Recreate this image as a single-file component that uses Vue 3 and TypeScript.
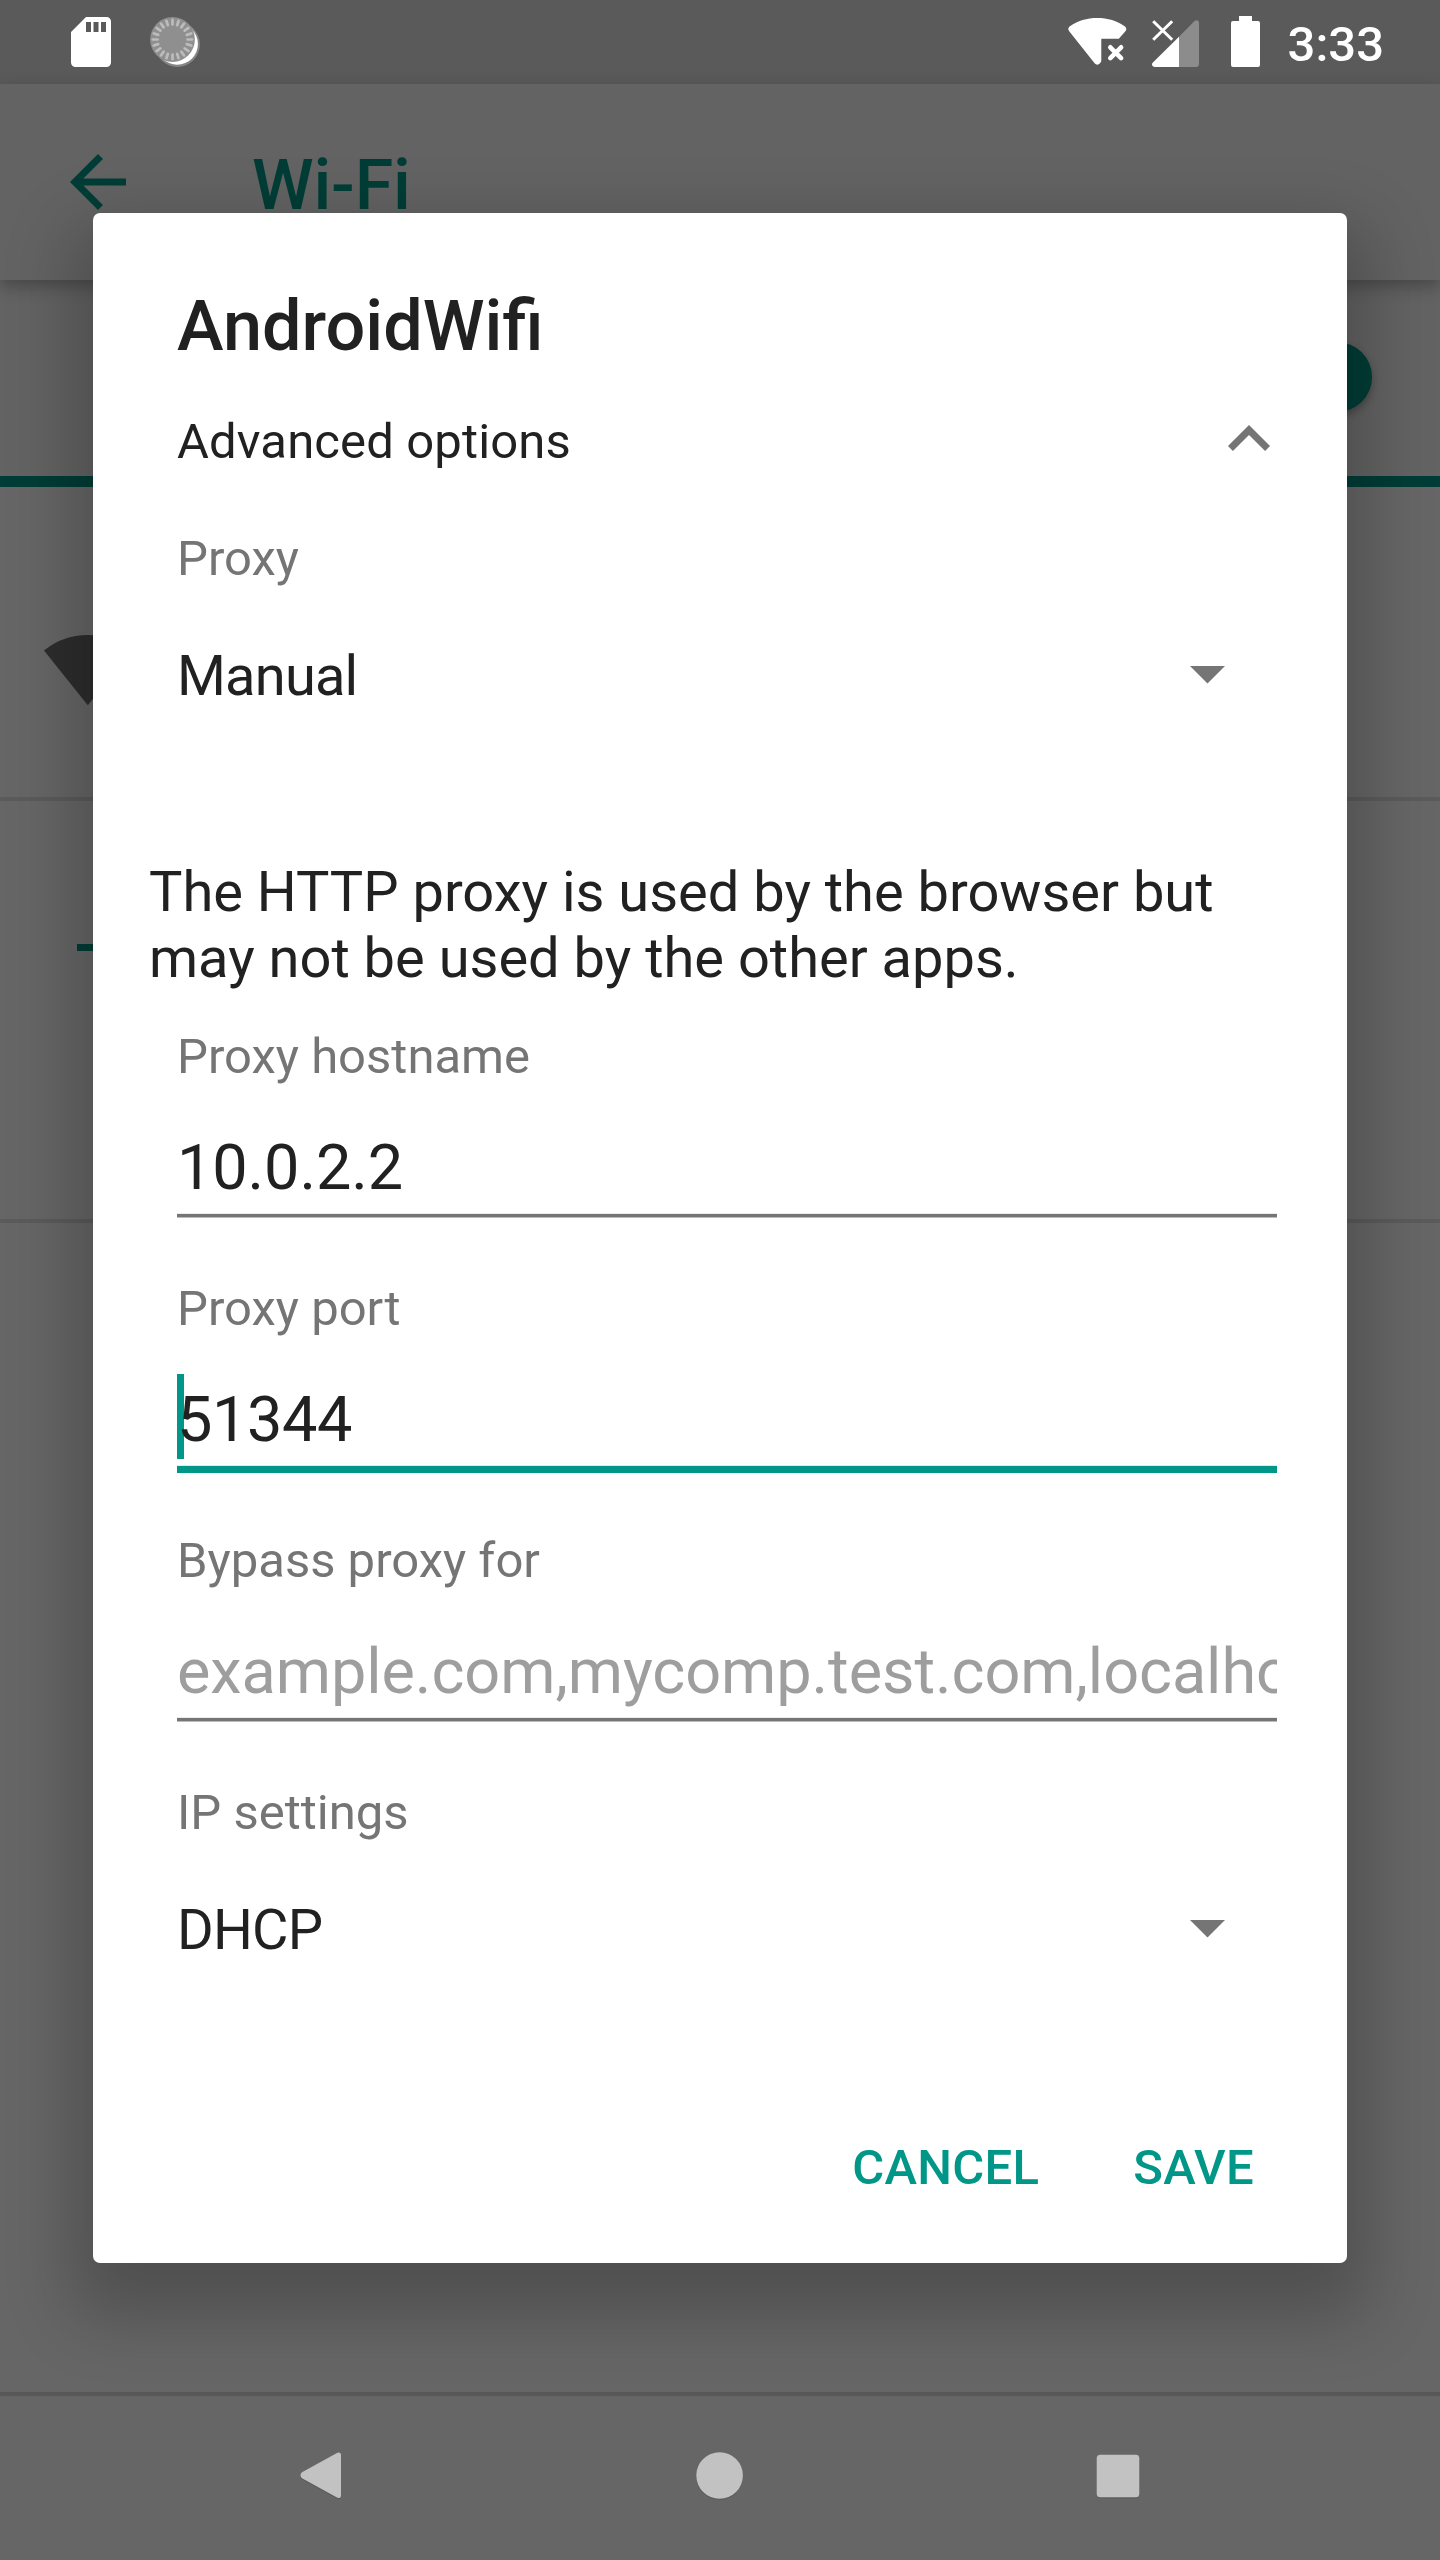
<script setup lang="ts">
interface ProxyField {
  label: string
  value: string
  hint?: boolean
  focused?: boolean
}

const fields: ProxyField[] = [
  { label: 'Proxy hostname', value: '10.0.2.2' },
  { label: 'Proxy port', value: '51344', focused: true },
  { label: 'Bypass proxy for', value: 'example.com,mycomp.test.com,localhost', hint: true },
]

const ticks: number[] = Array.from({ length: 20 }, (_, i) => i * 18)
</script>

<template>
  <div class="device">
    <header class="status-bar">
      <svg class="sd" width="40" height="50" viewBox="0 0 40 50">
        <path fill="#fff" fill-rule="evenodd" d="M15 0H35.500a4.500 4.500 0 0 1 4.500 4.500V45.500a4.500 4.500 0 0 1-4.500 4.500H4.500A4.500 4.500 0 0 1 0 45.500V15zM15 5v10h5V5zM22.500 5v10h5V5zM30 5v10h5V5z" />
      </svg>
      <svg class="sync" width="50" height="50" viewBox="0 0 50 50">
        <circle cx="27.400" cy="27.400" r="22.500" fill="#858585" />
        <circle cx="27.200" cy="27" r="20.700" fill="#fff" />
        <circle cx="22.500" cy="22.500" r="22.400" fill="#8f8f8f" />
        <g stroke="#bcbcbc" stroke-width="2.700" stroke-linecap="round">
          <line v-for="angle in ticks" :key="angle" x1="22.500" y1="2.800" x2="22.500" y2="7.500" :transform="`rotate(${angle} 22.500 22.500)`" />
        </g>
      </svg>
      <span class="grow"></span>
      <svg class="wifi-status" width="60" height="50" viewBox="0 0 60 50">
        <path fill="#fff" d="M1.200 14.200C-.2 12.600 0 10.900 1.600 9.600 9.500 3.600 19 1 29.300 1s19.800 2.600 27.700 8.600c1.600 1.300 1.800 3 .4 4.600l-6.600 7.500H33.300v22.500L32 46.200c-1.600 1.900-3.800 1.900-5.400 0z" />
        <path d="M42.300 30.300l10.800 10.800M53.100 30.300L42.300 41.100" stroke="#fff" stroke-width="4.600" stroke-linecap="round" />
      </svg>
      <svg class="signal" width="47" height="50" viewBox="0 0 47 50">
        <path fill="#8c8c8c" d="M27 19.700L42.300 4.200C44.200 2.300 47 3.300 47 6v41a3 3 0 0 1-3 3H27z" />
        <path fill="#fff" d="M27 19.700V50H3C.2 50-1 47.200.9 45.600z" />
        <path d="M1.200 4.200L20.200 22.800M20.200 4.200L1.200 22.800" stroke="#fff" stroke-width="3" />
      </svg>
      <svg class="battery" width="29" height="51" viewBox="0 0 29 51">
        <path fill="#fff" d="M8 0h13v5h6a2 2 0 0 1 2 2v42a2 2 0 0 1-2 2H2a2 2 0 0 1-2-2V7a2 2 0 0 1 2-2h6z" />
      </svg>
      <span class="clock">3:33</span>
    </header>

    <div class="app-bar">
      <svg width="84" height="84" viewBox="0 0 24 24">
        <path fill="#003d36" d="M20 11H7.830l5.590-5.590L12 4l-8 8 8 8 1.410-1.410L7.830 13H20z" />
      </svg>
      <h1>Wi-Fi</h1>
    </div>

    <div class="switch-bar"><span class="thumb"></span></div>

    <main class="networks">
      <div class="network">
        <svg width="88" height="71" viewBox="0 0 88 71">
          <path fill="#2d2d2d" d="M43.800 70.300L0 15.500C12.500 5.300 27.500 0 43.800 0s31.300 5.300 43.800 15.500z" />
        </svg>
      </div>
      <div class="add">
        <svg width="49" height="49" viewBox="0 0 49 49">
          <path fill="#003d36" d="M21 0h7v21h21v7H28v21h-7V28H0v-7h21z" />
        </svg>
      </div>
    </main>

    <nav class="nav-bar">
      <svg width="42" height="48" viewBox="0 0 42 48">
        <path fill="#5c5c5c" d="M36.400 2.600C38.500 1 41 1.800 41 4.500v40c0 2.700-2.500 3.500-4.600 1.900L2 27.500c-2-1.700-2-4.300 0-6z" />
        <path fill="#c2c2c2" d="M36.500 1.200C38.600-.4 41 .4 41 3v40.500c0 2.600-2.400 3.400-4.500 1.800L2 26.300c-2-1.700-2-4.300 0-6z" />
      </svg>
      <svg width="48" height="49" viewBox="0 0 48 49">
        <circle cx="24.600" cy="24.800" r="23.300" fill="#5c5c5c" />
        <circle cx="24.600" cy="23.500" r="23.300" fill="#c2c2c2" />
      </svg>
      <svg width="44" height="45" viewBox="0 0 44 45">
        <rect x=".7" y="1.800" width="42.600" height="42.600" rx="3.500" fill="#5c5c5c" />
        <rect x=".7" y=".7" width="42.600" height="42.600" rx="3.500" fill="#c2c2c2" />
      </svg>
    </nav>

    <div class="scrim">
      <section class="dialog">
        <h2>AndroidWifi</h2>
        <div class="advanced">
          <span>Advanced options</span>
          <svg width="84" height="84" viewBox="0 0 24 24">
            <path fill="#757575" d="M12 8l-6 6 1.410 1.410L12 10.830l4.590 4.580L18 14z" />
          </svg>
        </div>
        <div class="choice">
          <label>Proxy</label>
          <div class="select">
            <span>Manual</span>
            <svg width="35" height="18" viewBox="0 0 35 18"><path fill="#757575" d="M0 0h35L17.500 17.500z" /></svg>
          </div>
        </div>
        <p>The HTTP proxy is used by the browser but may not be used by the other apps.</p>
        <div v-for="field in fields" :key="field.label" class="field">
          <label>{{ field.label }}</label>
          <div class="input" :class="{ focused: field.focused, hint: field.hint }">
            <span v-if="field.focused" class="cursor"></span>
            <span class="value">{{ field.value }}</span>
          </div>
        </div>
        <div class="choice">
          <label>IP settings</label>
          <div class="select">
            <span>DHCP</span>
            <svg width="35" height="18" viewBox="0 0 35 18"><path fill="#757575" d="M0 0h35L17.500 17.500z" /></svg>
          </div>
        </div>
        <footer>
          <button type="button">CANCEL</button>
          <button type="button">SAVE</button>
        </footer>
      </section>
    </div>
  </div>
</template>

<style>
body {
  margin: 0;
  background: #666;
}
</style>

<style scoped>
.device {
  position: relative;
  display: flex;
  flex-direction: column;
  width: 1440px;
  height: 2560px;
  overflow: hidden;
  background: #666;
  font-family: Roboto, "Noto Sans", sans-serif;
  box-sizing: border-box;
}

.device svg {
  display: block;
  flex: none;
}

h1, h2, p {
  margin: 0;
  font-weight: 500;
}

.status-bar {
  display: flex;
  align-items: flex-start;
  height: 84px;
  box-sizing: border-box;
  padding: 16px 56px 0 71px;
  background: #5a5a5a;
}

.status-bar .sd { margin: 1px 39px 0 0; }
.status-bar .sync { margin-top: 1px; }
.grow { flex: 1; }
.status-bar .wifi-status { margin: 1px 24px 0 0; }
.status-bar .signal { margin: 1px 32px 0 0; }
.status-bar .battery { margin-right: 28px; }

.clock {
  color: #fff;
  font-size: 49px;
  line-height: 57px;
  font-weight: 500;
}

.app-bar {
  position: relative;
  display: flex;
  align-items: flex-start;
  height: 196px;
  box-sizing: border-box;
  padding: 56px 56px 0;
  background: #636363;
  box-shadow: 0 6px 16px rgba(0, 0, 0, 0.28);
  z-index: 1;
}

.app-bar h1 {
  margin: 4px 0 0 112px;
  color: #003d36;
  font-size: 70px;
  line-height: 82px;
  letter-spacing: -0.2px;
}

.switch-bar {
  display: flex;
  align-items: center;
  justify-content: flex-end;
  height: 207px;
  box-sizing: border-box;
  padding: 0 68px 2px 0;
  background: #636363;
  border-bottom: 11px solid #003d36;
}

.thumb {
  width: 70px;
  height: 70px;
  border-radius: 50%;
  background: #003d36;
  box-shadow: 0 4px 8px rgba(0, 0, 0, 0.3);
}

.networks {
  flex: 1;
}

.network {
  display: flex;
  align-items: flex-start;
  height: 314px;
  box-sizing: border-box;
  padding: 148px 0 0 44px;
  border-bottom: 4px solid #5b5b5b;
}

.add {
  display: flex;
  align-items: flex-start;
  height: 422px;
  box-sizing: border-box;
  padding: 122px 0 0 77px;
  border-bottom: 4px solid #5b5b5b;
}

.nav-bar {
  position: relative;
  z-index: 3;
  display: flex;
  align-items: center;
  justify-content: space-between;
  height: 168px;
  box-sizing: border-box;
  padding: 0 300px 4px;
  border-top: 4px solid #585858;
  background: #666;
}

.scrim {
  position: absolute;
  inset: 0;
  z-index: 2;
  padding: 213px 93px 0;
}

.dialog {
  height: 2050px;
  box-sizing: border-box;
  padding: 72px 56px 0;
  border-radius: 7px;
  background: #fff;
  color: #212121;
  box-shadow: 0 33px 68px 21px rgba(0, 0, 0, 0.225);
}

h2 {
  margin: 0 28px 30px;
  font-size: 70.2px;
  line-height: 82px;
}

.advanced {
  display: flex;
  justify-content: space-between;
  height: 133px;
  padding-left: 28px;
}

.advanced span {
  margin-top: 16px;
  font-size: 49px;
  line-height: 57px;
  letter-spacing: 0.13px;
}

label {
  display: block;
  color: #757575;
  font-size: 49px;
  line-height: 57px;
}

.choice {
  height: 329px;
  padding: 0 66px 0 28px;
}

.select {
  display: flex;
  justify-content: space-between;
  margin-top: 56px;
  font-size: 56px;
  line-height: 66px;
  letter-spacing: -0.8px;
}

.select svg {
  margin-top: 23px;
}

p {
  width: 1130px;
  margin-bottom: 37px;
  font-size: 56px;
  line-height: 66px;
  font-weight: 400;
}

.field {
  height: 252px;
  margin: 0 14px 0 28px;
}

.input {
  position: relative;
  height: 73px;
  margin-top: 46px;
  overflow: hidden;
  border-bottom: 1px solid #bcbcbc;
  font-size: 63px;
  line-height: 73px;
  letter-spacing: -0.1px;
  white-space: nowrap;
}

.input::after {
  content: "";
  display: block;
  height: 3px;
  margin-top: 9px;
  border-top: 1px solid #ececec;
  background: #757575;
}

.input:not(.focused) {
  height: 86px;
}

.value {
  display: block;
  position: relative;
}

.hint .value {
  color: #9e9e9e;
  letter-spacing: -0.06px;
}

.focused {
  height: 90px;
  overflow: visible;
  border-bottom: 0;
  letter-spacing: -0.4px;
}

.focused::after {
  height: 7px;
  border-top-color: #d9efed;
  background: #009688;
}

.cursor {
  position: absolute;
  left: 0;
  top: -9px;
  width: 7px;
  height: 85px;
  background: #009688;
}

footer {
  display: flex;
  justify-content: flex-end;
  gap: 94px;
  margin-top: 26px;
  padding-right: 37px;
}

button {
  padding: 0;
  border: 0;
  background: none;
  color: #009688;
  font: 500 49px/57px Roboto, "Noto Sans", sans-serif;
  letter-spacing: 0.3px;
}
</style>
